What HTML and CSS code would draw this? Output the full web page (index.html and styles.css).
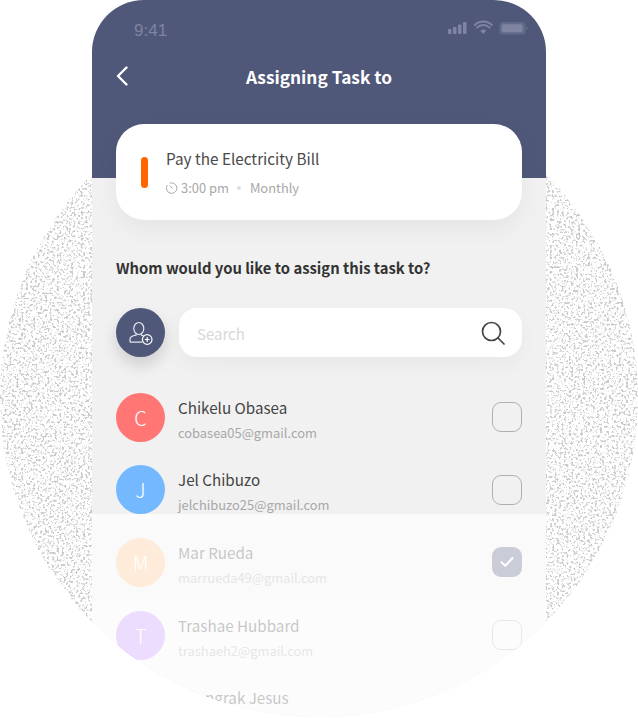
FILE: index.html
```html
<!DOCTYPE html>
<html lang="en">
<head>
    <meta charset="UTF-8">
    <title>Assigning Task to</title>
    <link rel="stylesheet" href="styles.css">
</head>
<body>
    <div class="stage">
        <svg class="noise" width="638" height="718" viewBox="0 0 638 718">
            <filter id="speckle" x="0" y="0" width="100%" height="100%">
                <feTurbulence type="fractalNoise" baseFrequency="0.42" numOctaves="3" seed="7" result="grain"/>
                <feColorMatrix in="grain" type="matrix" values="0 0 0 0 0.6  0 0 0 0 0.6  0 0 0 0 0.6  5 5 0 0 -5.1"/>
                <feComposite in2="SourceAlpha" operator="in"/>
            </filter>
            <circle cx="319" cy="398" r="319" fill="#000" filter="url(#speckle)"/>
        </svg>

        <div class="phone">
            <header class="top">
                <div class="status">
                    <span class="time">9:41</span>
                    <svg class="status-icons" width="80" height="16" viewBox="0 0 80 16">
                        <g fill="#7e84a1">
                            <rect x="0" y="9" width="3.5" height="5" rx="1"/>
                            <rect x="5" y="7" width="3.5" height="7" rx="1"/>
                            <rect x="10" y="4.500" width="3.5" height="9.500" rx="1"/>
                            <rect x="15" y="2" width="3.5" height="12" rx="1"/>
                            <path d="M35.300 14l-3-3.200a4.400 4.400 0 0 1 6 0z"/>
                            <rect x="51.500" y="2" width="26" height="12.500" rx="3.500" fill="#626a8a"/>
                            <rect x="53.700" y="4.300" width="21" height="8" rx="2"/>
                            <rect x="78" y="6.500" width="1.500" height="3.500" rx=".7" fill="#626a8a"/>
                        </g>
                        <path d="M29 7.600a9 9 0 0 1 12.600 0M26.800 5a12.300 12.300 0 0 1 17 0" fill="none" stroke="#7e84a1" stroke-width="2" stroke-linecap="round"/>
                    </svg>
                </div>
                <div class="nav">
                    <svg class="back" width="12" height="20" viewBox="0 0 12 20">
                        <path d="M10.500 1.500L2 10l8.500 8.500" fill="none" stroke="#fff" stroke-width="2.400" stroke-linecap="round" stroke-linejoin="round"/>
                    </svg>
                    <h1 class="title">Assigning Task to</h1>
                </div>
                <div class="card">
                    <span class="accent"></span>
                    <div>
                        <p class="task-name">Pay the Electricity Bill</p>
                        <p class="task-meta">
                            <svg width="12" height="12" viewBox="0 0 12 12">
                                <path d="M4.400 .9a5.300 5.300 0 1 1-3.400 2.500M4 3.800l2.200 2.400" fill="none" stroke="#a8a8a8" stroke-width="1" stroke-linecap="round"/>
                            </svg>
                            <span class="task-time">3:00 pm</span>
                            <span class="dot"></span>
                            <span>Monthly</span>
                        </p>
                    </div>
                </div>
            </header>

            <main class="content">
                <h2 class="question">Whom would you like to assign this task to?</h2>
                <div class="search-row">
                    <button class="add-user">
                        <svg width="26" height="26" viewBox="0 0 26 26">
                            <g fill="none" stroke="#e4e6ee" stroke-width="1.200">
                                <ellipse cx="10.800" cy="8.500" rx="5" ry="6"/>
                                <path d="M8 14.200v1c-3 .5-6 1.600-6 4v2.300a.7.7 0 0 0 .7.7H14M13.500 14.200v1l2.500.8"/>
                                <circle cx="19.200" cy="19.500" r="4.800" stroke="#fff"/>
                                <path d="M16.800 19.500h4.800M19.200 17.100v4.800" stroke="#fff"/>
                            </g>
                        </svg>
                    </button>
                    <div class="search">
                        <span class="placeholder">Search</span>
                        <svg width="24" height="24" viewBox="0 0 24 24">
                            <circle cx="10.500" cy="10.500" r="9" fill="none" stroke="#444" stroke-width="1.700"/>
                            <path d="M17 17l6 6" stroke="#444" stroke-width="1.700" stroke-linecap="round"/>
                        </svg>
                    </div>
                </div>

                <ul class="people">
                    <li class="person">
                        <span class="avatar red">C</span>
                        <div class="info">
                            <p class="name">Chikelu Obasea</p>
                            <p class="email">cobasea05@gmail.com</p>
                        </div>
                        <span class="check"></span>
                    </li>
                    <li class="person">
                        <span class="avatar blue">J</span>
                        <div class="info">
                            <p class="name">Jel Chibuzo</p>
                            <p class="email">jelchibuzo25@gmail.com</p>
                        </div>
                        <span class="check"></span>
                    </li>
                    <li class="person picked">
                        <span class="avatar orange">M</span>
                        <div class="info">
                            <p class="name">Mar Rueda</p>
                            <p class="email">marrueda49@gmail.com</p>
                        </div>
                        <span class="check checked">
                            <svg width="14" height="12" viewBox="0 0 14 12">
                                <path d="M1.500 6.200l3.800 3.600 7.200-7.800" fill="none" stroke="#fff" stroke-width="2" stroke-linecap="round" stroke-linejoin="round"/>
                            </svg>
                        </span>
                    </li>
                    <li class="person">
                        <span class="avatar purple">T</span>
                        <div class="info">
                            <p class="name">Trashae Hubbard</p>
                            <p class="email">trashaeh2@gmail.com</p>
                        </div>
                        <span class="check"></span>
                    </li>
                    <li class="person last">
                        <span class="avatar green">A</span>
                        <div class="info">
                            <p class="name">Anangrak Jesus</p>
                        </div>
                    </li>
                </ul>
                <div class="fade"></div>
            </main>
        </div>
    </div>
</body>
</html>
```

FILE: styles.css
```css
* {
    box-sizing: border-box;
}
html, body {
    margin: 0;
    height: 718px;
    overflow: hidden;
    background: #fff;
}
body {
    font-family: "Noto Sans CJK SC", "Noto Sans", sans-serif;
    color: #333;
}
p, h1, h2, ul {
    margin: 0;
    padding: 0;
}
.stage {
    position: relative;
    width: 638px;
    height: 718px;
}
.noise {
    position: absolute;
    left: 0;
    top: 0;
}
.phone {
    position: relative;
    width: 454px;
    height: 718px;
    margin-left: 92px;
}

/* header */
.top {
    position: relative;
    z-index: 1;
    height: 178px;
    padding: 0 24px;
    background: #4f5879;
    border-radius: 52px 52px 0 0;
}
.status {
    display: flex;
    justify-content: space-between;
    align-items: center;
    height: 58px;
    padding-left: 18px;
    margin-right: -6px;
}
.time {
    padding-top: 3px;
    font-family: "Liberation Sans", sans-serif;
    font-size: 17px;
    color: #7e84a1;
}
.status-icons {
    margin-bottom: 3px;
}
.nav {
    position: relative;
    height: 38px;
    margin-top: -1px;
    display: flex;
    align-items: center;
    justify-content: center;
}
.back {
    position: absolute;
    left: 0;
    top: 9px;
}
.title {
    font-size: 17.3px;
    font-weight: 700;
    color: #fff;
}
.card {
    display: flex;
    align-items: center;
    gap: 18px;
    height: 96px;
    margin-top: 29px;
    padding-left: 24.5px;
    background: #fff;
    border-radius: 28px;
    box-shadow: 0 10px 24px rgba(0, 0, 0, 0.05);
}
.accent {
    width: 7.5px;
    height: 31px;
    border-radius: 4px;
    background: #ff6600;
}
.task-name {
    font-size: 15.3px;
    line-height: 24px;
    color: #4a4a4a;
}
.task-meta {
    display: flex;
    align-items: center;
    margin-top: 8px;
    margin-bottom: 1px;
    font-size: 12.9px;
    line-height: 20px;
    color: #a8a8a8;
}
.task-time {
    margin-left: 3px;
}
.dot {
    width: 4px;
    height: 4px;
    margin: 0 8.5px;
    border-radius: 50%;
    background: #ddd;
}

/* body under the header, cut off by the big circle */
.content {
    position: relative;
    height: 540px;
    padding: 0 24px;
    background: #f1f1f1;
    clip-path: circle(319px at 227px 220px);
}
.question {
    padding-top: 78px;
    font-size: 14.8px;
    line-height: 24px;
    font-weight: 700;
    color: #333;
}
.search-row {
    display: flex;
    gap: 14px;
    margin-top: 28px;
}
.add-user {
    display: flex;
    align-items: center;
    justify-content: center;
    width: 49px;
    height: 49px;
    padding: 0;
    border: none;
    border-radius: 50%;
    background: #4f5879;
    box-shadow: 0 8px 16px rgba(0, 0, 0, 0.15);
}
.search {
    flex: 1;
    display: flex;
    align-items: center;
    justify-content: space-between;
    padding: 0 17px 0 18px;
    height: 49px;
    border-radius: 18px;
    background: #fff;
    box-shadow: 0 8px 20px rgba(0, 0, 0, 0.04);
}
.placeholder {
    padding-top: 2px;
    font-size: 15px;
    color: #d8d8d8;
}
.people {
    list-style: none;
    margin: 24px -24px 0;
}
.person {
    display: flex;
    align-items: center;
    height: 72.6px;
    padding: 0 24px;
}
.picked {
    background: #ededed;
}
.picked ~ .person {
    background: #f6f6f6;
}
.avatar {
    flex: none;
    display: flex;
    align-items: center;
    justify-content: center;
    width: 49px;
    height: 49px;
    border-radius: 50%;
    font-size: 20px;
    font-weight: 300;
    color: #fff;
}
.red { background: #ff7675; }
.blue { background: #74b9ff; }
.orange { background: #ffbc80; }
.purple { background: #c08af8; }
.green { background: #8ad4a8; }
.info {
    flex: 1;
    margin-left: 13px;
    padding-top: 3px;
}
.name {
    font-size: 15.2px;
    line-height: 24px;
    color: #444;
}
.email {
    margin-top: 4px;
    font-size: 12.9px;
    line-height: 20px;
    color: #a8a8a8;
}
.last .info {
    padding-bottom: 24px;
}
.check {
    flex: none;
    display: flex;
    align-items: center;
    justify-content: center;
    width: 30px;
    height: 30px;
    border: 1.5px solid #b0b0b0;
    border-radius: 9px;
}
.checked {
    border: none;
    background: #4f5879;
}
.fade {
    position: absolute;
    left: 0;
    right: 0;
    top: 336px;
    bottom: 0;
    background: rgba(255, 255, 255, 0.7);
}
```
